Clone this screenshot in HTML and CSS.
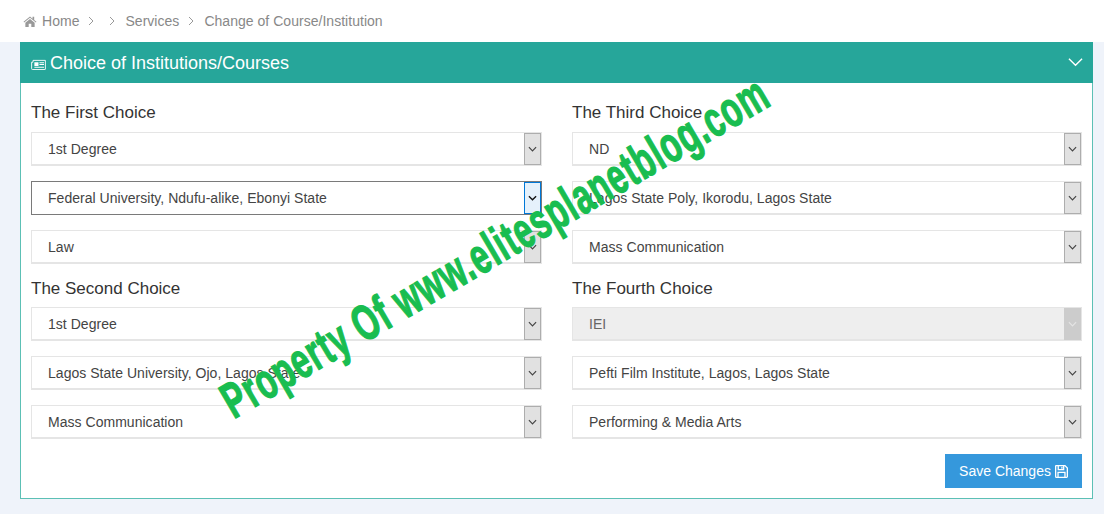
FILE: index.html
```html
<!DOCTYPE html>
<html lang="en">
<head>
<meta charset="utf-8">
<title>Change of Course/Institution</title>
<link rel="stylesheet" href="styles.css">
</head>
<body>
<nav class="crumbs">
  <svg class="home" viewBox="0 0 16 14"><path d="M8 1.2 0.6 7.4l.7.8L8 2.7l6.7 5.5.7-.8-2.6-2.2V1.600h-1.900v2.300zM2.700 8.400V13.400h3.800V9.600h3V13.400h3.800V8.400L8 4z"/></svg>
  <span class="c-home">Home</span>
  <svg class="sep sep1" viewBox="0 0 6 10"><path d="M1 1l4 4-4 4"/></svg>
  <svg class="sep sep2" viewBox="0 0 6 10"><path d="M1 1l4 4-4 4"/></svg>
  <span class="c-item">Services</span>
  <svg class="sep sep3" viewBox="0 0 6 10"><path d="M1 1l4 4-4 4"/></svg>
  <span class="c-item">Change of Course/Institution</span>
</nav>
<main class="panel">
  <header class="panel-head">
    <h1 class="panel-title">
      <svg class="news" viewBox="0 0 16 12"><path class="news-frame" d="M2 1.500h13.500v9.500a.5.5 0 0 1-.5.500H1.500a1 1 0 0 1-1-1V3.500h1.500z"/><path class="news-fill" d="M3.500 3.500h4.500v4h-4.500zM9 3.500h5v1H9zM9 5.500h5v1H9zM3.500 8.500H14v1H3.500z"/></svg>
      Choice of Institutions/Courses
    </h1>
    <svg class="collapse" viewBox="0 0 16 10"><path d="M1 1.500l7 7 7-7"/></svg>
  </header>
  <form class="panel-body">
    <div class="choices">
      <section class="choice">
        <h2>The First Choice</h2>
        <div class="sel"><span class="val">1st Degree</span><span class="btn"><svg viewBox="0 0 10 6"><path d="M1 1l4 4 4-4"/></svg></span></div>
        <div class="sel focus"><span class="val">Federal University, Ndufu-alike, Ebonyi State</span><span class="btn"><svg viewBox="0 0 10 6"><path d="M1 1l4 4 4-4"/></svg></span></div>
        <div class="sel"><span class="val">Law</span><span class="btn"><svg viewBox="0 0 10 6"><path d="M1 1l4 4 4-4"/></svg></span></div>
      </section>
      <section class="choice">
        <h2>The Third Choice</h2>
        <div class="sel"><span class="val">ND</span><span class="btn"><svg viewBox="0 0 10 6"><path d="M1 1l4 4 4-4"/></svg></span></div>
        <div class="sel"><span class="val">Lagos State Poly, Ikorodu, Lagos State</span><span class="btn"><svg viewBox="0 0 10 6"><path d="M1 1l4 4 4-4"/></svg></span></div>
        <div class="sel"><span class="val">Mass Communication</span><span class="btn"><svg viewBox="0 0 10 6"><path d="M1 1l4 4 4-4"/></svg></span></div>
      </section>
      <section class="choice">
        <h2>The Second Choice</h2>
        <div class="sel"><span class="val">1st Degree</span><span class="btn"><svg viewBox="0 0 10 6"><path d="M1 1l4 4 4-4"/></svg></span></div>
        <div class="sel"><span class="val">Lagos State University, Ojo, Lagos State</span><span class="btn"><svg viewBox="0 0 10 6"><path d="M1 1l4 4 4-4"/></svg></span></div>
        <div class="sel"><span class="val">Mass Communication</span><span class="btn"><svg viewBox="0 0 10 6"><path d="M1 1l4 4 4-4"/></svg></span></div>
      </section>
      <section class="choice">
        <h2>The Fourth Choice</h2>
        <div class="sel disabled"><span class="val">IEI</span><span class="btn"><svg viewBox="0 0 10 6"><path d="M1 1l4 4 4-4"/></svg></span></div>
        <div class="sel"><span class="val">Pefti Film Institute, Lagos, Lagos State</span><span class="btn"><svg viewBox="0 0 10 6"><path d="M1 1l4 4 4-4"/></svg></span></div>
        <div class="sel"><span class="val">Performing &amp; Media Arts</span><span class="btn"><svg viewBox="0 0 10 6"><path d="M1 1l4 4 4-4"/></svg></span></div>
      </section>
    </div>
    <div class="actions">
      <button type="button" class="save">Save Changes
        <svg class="floppy" viewBox="0 0 12 12"><path d="M1 .6h8.200L11.400 2.800V10.600a.8.8 0 0 1-.8.800H1.400a.8.8 0 0 1-.8-.8V1a.4.4 0 0 1 .4-.4z"/><path d="M3 1v3.200h5V1M2.800 11V6.800h6.400V11M6.400 1.600v1.800"/></svg>
      </button>
    </div>
  </form>
</main>
<div class="watermark">Property Of www.elitesplanetblog.com</div>
</body>
</html>
```
FILE: styles.css
```css
* { box-sizing: border-box; }
html, body { margin: 0; padding: 0; }
body {
  width: 1104px;
  height: 514px;
  overflow: hidden;
  position: relative;
  background: #eff3fa;
  font-family: "Liberation Sans", Arial, sans-serif;
  color: #444;
}
.crumbs {
  height: 42px;
  background: #fff;
  padding: 0 0 0 23px;
  display: flex;
  align-items: center;
  font-size: 14px;
  letter-spacing: .03px;
  color: #888;
}
.home { width: 14px; height: 13px; fill: #999; margin-right: 5px; }
.sep { width: 6px; height: 10px; fill: none; stroke: #999; stroke-width: 1; }
.sep1 { margin: 0 0 0 9px; }
.sep2 { margin: 0 0 0 15px; }
.c-item { margin-left: 10px; }
.sep3 { margin: 0 0 0 9px; }
.panel {
  margin: 0 11px 0 20px;
  width: 1073px;
  height: 457px;
  background: #fff;
  border: 1px solid #5cc0b5;
  border-top: 0;
}
.panel-head {
  height: 41px;
  margin: 0 -1px;
  padding: 1px 10px 0 11px;
  background: #26a69a;
  color: #fff;
  display: flex;
  align-items: center;
  justify-content: space-between;
}
.panel-title {
  margin: 0;
  font-size: 18px;
  font-weight: 400;
  display: flex;
  align-items: center;
  gap: 4px;
}
.news { width: 15px; height: 11px; margin-top: 2px; }
.news-frame { fill: none; stroke: #fff; stroke-width: 1; }
.news-fill { fill: #fff; }
.collapse { width: 15px; height: 10px; fill: none; stroke: #fff; stroke-width: 1.500; margin-top: -2px; }
.panel-body { padding: 0 10px; }
.choices {
  display: grid;
  grid-template-columns: 511px 510px;
  column-gap: 30px;
}
.choice h2 {
  margin: 0;
  font-size: 17px;
  font-weight: 400;
  line-height: 20px;
  color: #333;
}
.choice:nth-child(-n+2) h2 { padding-top: 20px; padding-bottom: 9px; }
.choice:nth-child(n+3) h2 { padding-top: 15px; padding-bottom: 8px; }
.sel {
  height: 34px;
  margin-bottom: 15px;
  background: #fff;
  border: 1px solid #e5e5e5;
  border-bottom-width: 2px;
  display: flex;
  align-items: center;
  justify-content: space-between;
  font-size: 14px;
  letter-spacing: .03px;
  color: #444;
  padding: 0 0 0 16px;
}
.choice .sel:last-child { margin-bottom: 0; }
.btn {
  width: 17px;
  height: 32px;
  margin-bottom: -1px;
  background: #e1e1e1;
  border: 1px solid #adadad;
  display: flex;
  align-items: center;
  justify-content: center;
}
.btn svg { width: 9px; height: 6px; fill: none; stroke: #444; stroke-width: 1.300; }
.focus { border: 1px solid #7a7a7a; }
.focus .btn { background: #e5f1fb; border-color: #0078d7; margin-bottom: 0; }
.focus .btn svg { stroke: #111; stroke-width: 1.500; }
.disabled { background: #eee; border-color: #e5e5e5; color: #666; }
.disabled .btn { background: #ccc; border-color: #ccc; }
.disabled .btn svg { stroke: #e4e4e4; }
.actions { display: flex; justify-content: flex-end; padding-top: 15px; }
.save {
  width: 137px;
  height: 34px;
  background: #3598dc;
  border: 0;
  color: #fff;
  font: 14px "Liberation Sans", Arial, sans-serif;
  display: flex;
  align-items: center;
  justify-content: center;
  gap: 4px;
  padding: 0;
}
.floppy { width: 13px; height: 13px; fill: none; stroke: #fff; stroke-width: 1.200; }
.watermark {
  position: absolute;
  left: 495px;
  top: 247px;
  width: max-content;
  font-family: "Liberation Sans", Arial, sans-serif;
  font-weight: 700;
  font-size: 50px;
  letter-spacing: 1.700px;
  line-height: 50px;
  white-space: nowrap;
  color: #19bd50;
  -webkit-text-stroke: 1.400px #19bd50;
  transform: translate(-50%, -50%) rotate(-30.300deg) scaleX(.64);
}
```
